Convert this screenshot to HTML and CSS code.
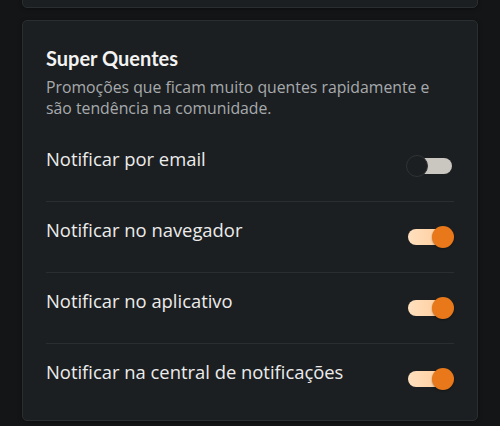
FILE: index.html
```html
<!DOCTYPE html>
<html lang="pt-BR">
<head>
<meta charset="utf-8">
<title>Notificações</title>
<link rel="stylesheet" href="styles.css">
</head>
<body>
<div class="page">
  <div class="card card-prev"></div>
  <section class="card">
    <h2 class="title">Super Quentes</h2>
    <p class="desc">Promoções que ficam muito quentes rapidamente e são tendência na comunidade.</p>
    <div class="rows">
      <div class="row">
        <span class="label">Notificar por email</span>
        <span class="switch"><span class="track"></span><span class="knob"></span></span>
      </div>
      <div class="row">
        <span class="label">Notificar no navegador</span>
        <span class="switch on"><span class="track"></span><span class="knob"></span></span>
      </div>
      <div class="row">
        <span class="label">Notificar no aplicativo</span>
        <span class="switch on"><span class="track"></span><span class="knob"></span></span>
      </div>
      <div class="row">
        <span class="label">Notificar na central de notificações</span>
        <span class="switch on"><span class="track"></span><span class="knob"></span></span>
      </div>
    </div>
  </section>
</div>
</body>
</html>
```

FILE: styles.css
```css
* { box-sizing: border-box; }
html, body { margin: 0; padding: 0; }
body {
  background: #131516;
  font-family: "Open Sans", "Noto Sans", sans-serif;
  color: #ececec;
  width: 500px;
  height: 426px;
  overflow: hidden;
}
.page {
  padding: 0 22px 0 22px;
  display: flex;
  flex-direction: column;
  gap: 12px;
  margin-top: -40px;
}
.card {
  background: #1c1f21;
  border: 1px solid #2b2e31;
  border-radius: 5px;
  padding: 25px 23px 6px 23px;
  box-shadow: 0 1px 4px rgba(0,0,0,0.35);
}
.card-prev {
  height: 48px;
  padding: 0;
}
.title {
  margin: 0;
  font-family: "Lato", "Open Sans", sans-serif;
  font-size: 20px;
  line-height: 24px;
  font-weight: 700;
  color: #f3f3f3;
}
.desc {
  margin: 7px 0 0 0;
  font-size: 15.8px;
  line-height: 21px;
  color: #a7aaad;
}
.rows {
  margin-top: 12px;
  display: flex;
  flex-direction: column;
}
.row {
  display: flex;
  justify-content: space-between;
  align-items: center;
  padding: 16px 0 30px 0;
  border-top: 1px solid #2b2e31;
  position: relative;
}
.row:first-child { border-top: none; }
.label {
  font-size: 18.4px;
  line-height: 24px;
  color: #ececec;
  align-self: flex-start;
}
.switch {
  position: absolute;
  right: 0;
  top: 50%;
  width: 48px;
  height: 22px;
  margin-top: -11px;
}
.track {
  position: absolute;
  left: 2px;
  right: 2px;
  top: 3px;
  height: 16px;
  border-radius: 8px;
  background: #cac7c1;
}
.knob {
  position: absolute;
  top: 0;
  left: 0;
  width: 22px;
  height: 22px;
  border-radius: 50%;
  background: #1c1f21;
  border: 1px solid #2f3336;
}
.switch.on .track {
  background: linear-gradient(90deg, #ffe0bf, #ffc894);
}
.switch.on .knob {
  left: auto;
  right: 0;
  background: #e8781a;
  border: none;
  box-shadow: 0 1px 2px rgba(0,0,0,0.35);
}
```
